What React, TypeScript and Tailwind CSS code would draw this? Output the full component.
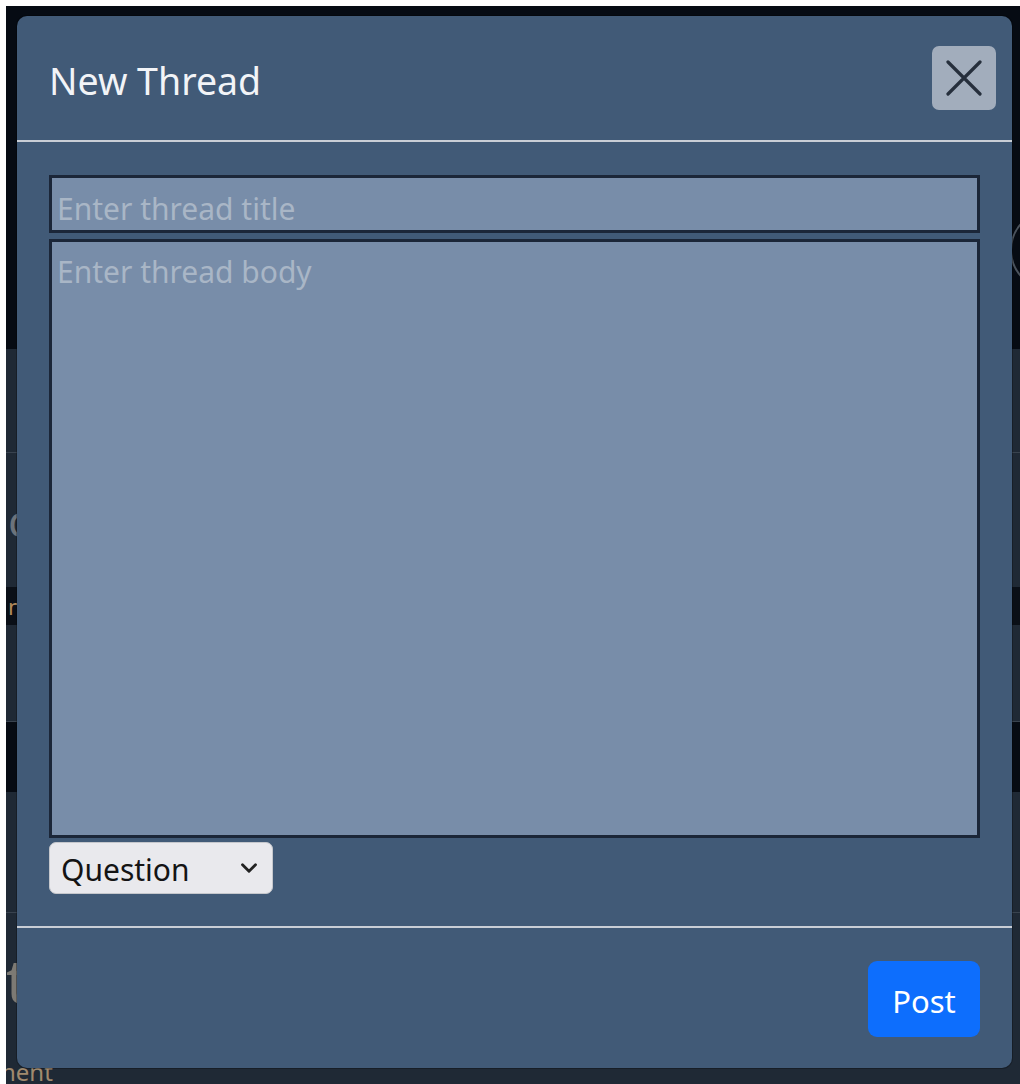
import { ChevronDown } from "lucide-react"

const FONT = { fontFamily: '"Noto Sans", "Open Sans", Arial, sans-serif' }

// Background page rows sitting behind the modal backdrop
function BackgroundPage() {
  return (
    <div className="flex h-full flex-col">
      <div className="relative h-[343px] shrink-0 bg-[#060b13]">
        <div className="absolute right-[-70px] top-[204px] h-[80px] w-[80px] rounded-full border-2 border-[#4a525c]" />
      </div>
      <div className="h-[104px] shrink-0 border-b border-[#39434f] bg-[#1f2935]" />
      <div className="flex h-[134px] shrink-0 flex-col justify-center bg-[#1f2935] pl-[2px]">
        <span className="text-[44px] leading-none text-[#6c737b]">c</span>
      </div>
      <div className="flex h-[38px] shrink-0 items-center bg-[#0a0f17] pl-[2px]">
        <span className="text-[22px] text-[#b0885a]">ne</span>
      </div>
      <div className="h-[97px] shrink-0 border-b border-[#39434f] bg-[#1f2935]" />
      <div className="h-[70px] shrink-0 bg-[#060b13]" />
      <div className="h-[121px] shrink-0 border-b border-[#39434f] bg-[#1f2935]" />
      <div className="flex h-[134px] shrink-0 items-center bg-[#1f2935]">
        <span className="text-[60px] leading-none text-[#7d7a74]">t</span>
      </div>
      <div className="flex flex-1 items-end bg-[#1f2935]">
        <span className="-ml-[5px] text-[24px] leading-[24px] text-[#a08a6e]">nent</span>
      </div>
    </div>
  )
}

function CloseButton() {
  return (
    <button
      className="-my-[2px] -mr-4 flex h-16 w-16 items-center justify-center rounded-[7px] bg-[#a2adbc]"
      aria-label="Close"
    >
      <svg width="36" height="36" viewBox="0 0 36 36" fill="none">
        <path d="M2 2L34 34M34 2L2 34" stroke="#262f3c" strokeWidth="3.2" strokeLinecap="round" />
      </svg>
    </button>
  )
}

export default function App() {
  return (
    <div className="min-h-screen bg-white pl-[6px] pt-[6px]" style={FONT}>
      <div className="relative h-[1078px] overflow-hidden">
        <BackgroundPage />

        {/* modal dialog */}
        <div className="absolute left-[11px] top-[10px] flex h-[1052px] w-[995px] flex-col rounded-[10px] bg-[#415a77] shadow-[0_0_0_1px_rgba(0,0,0,0.25)]">
          <div className="flex items-center justify-between border-b-2 border-[#c9ced6] px-8 py-8">
            <h5 className="pt-[5px] text-[37.5px] leading-[55px] text-[#f2f4f7]">New Thread</h5>
            <CloseButton />
          </div>

          <div className="flex flex-col px-8 pb-8 pt-[33px]">
            <input
              className="h-[58px] w-full border-[3px] border-[#1b2638] bg-[#788da9] px-[5px] pt-[8px] text-[30px] text-[#1b2638] outline-none placeholder:text-[#a9b6c6]"
              placeholder="Enter thread title"
            />
            <textarea
              className="mt-[6px] h-[599px] w-full resize-none border-[3px] border-[#1b2638] bg-[#788da9] px-[5px] pb-[4px] pt-[7px] text-[30px] leading-[46px] text-[#1b2638] outline-none placeholder:text-[#a9b6c6]"
              placeholder="Enter thread body"
            />
            <div className="relative mt-[4px] w-[224px]">
              <select className="h-[52px] w-full appearance-none rounded-[7px] border border-[#c5c7cc] bg-[#e9e9ed] pl-[11px] pt-[2px] text-[30px] text-[#141414] outline-none">
                <option>Question</option>
                <option>Discussion</option>
              </select>
              <ChevronDown
                className="pointer-events-none absolute right-[11px] top-[13px] h-[26px] w-[26px] text-[#222]"
                strokeWidth={2.6}
              />
            </div>
          </div>

          <div className="flex flex-1 items-start justify-end border-t-2 border-[#c9ced6] px-8 pt-[33px]">
            <button className="h-[76px] w-[112px] rounded-[9px] bg-[#0d6efd] pt-[4px] text-[31px] text-white">
              Post
            </button>
          </div>
        </div>
      </div>
    </div>
  )
}
